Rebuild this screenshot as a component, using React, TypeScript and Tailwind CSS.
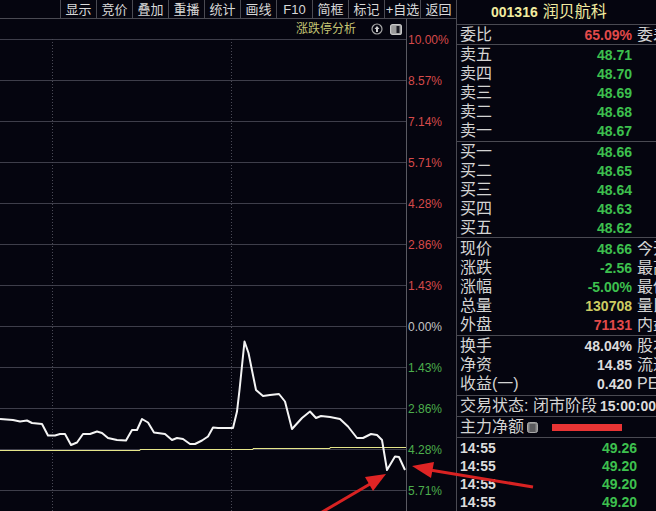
const tools = ["显示", "竞价", "叠加", "重播", "统计", "画线", "F10", "简框", "标记", "+自选", "返回"];

const axis = [
  ["10.00%", "text-[#d64a4a]"],
  ["8.57%", "text-[#d64a4a]"],
  ["7.14%", "text-[#d64a4a]"],
  ["5.71%", "text-[#d64a4a]"],
  ["4.28%", "text-[#d64a4a]"],
  ["2.86%", "text-[#d64a4a]"],
  ["1.43%", "text-[#d64a4a]"],
  ["0.00%", "text-[#c4c4c4]"],
  ["1.43%", "text-[#4cae4c]"],
  ["2.86%", "text-[#4cae4c]"],
  ["4.28%", "text-[#4cae4c]"],
  ["5.71%", "text-[#4cae4c]"],
];

const GREEN = "text-[#3dc04e]";
const RED = "text-[#e24a4a]";
const YELLOW = "text-[#cccc62]";
const WHITE = "text-[#dcdcdc]";

const sells = [
  ["卖五", "48.71"],
  ["卖四", "48.70"],
  ["卖三", "48.69"],
  ["卖二", "48.68"],
  ["卖一", "48.67"],
];
const buys = [
  ["买一", "48.66"],
  ["买二", "48.65"],
  ["买三", "48.64"],
  ["买四", "48.63"],
  ["买五", "48.62"],
];
const quotes = [
  { label: "现价", value: "48.66", color: GREEN, extra: "今开" },
  { label: "涨跌", value: "-2.56", color: GREEN, extra: "最高" },
  { label: "涨幅", value: "-5.00%", color: GREEN, extra: "最低" },
  { label: "总量", value: "130708", color: YELLOW, extra: "量比" },
  { label: "外盘", value: "71131", color: RED, extra: "内盘" },
];
const finance = [
  { label: "换手", value: "48.04%", color: WHITE, extra: "股本" },
  { label: "净资", value: "14.85", color: WHITE, extra: "流通" },
  { label: "收益(一)", value: "0.420", color: WHITE, extra: "PE" },
];
const ticks = ["49.26", "49.20", "49.20", "49.20"];

const price =
  "0,419 13,420 20,421.5 27,420.5 32,423 42,424 48,435.5 55,435.5 60,434 65,434 71,445 77,442.5 83,434 90,434 97,431.5 102,433 108,438 117,440 126,440.5 132,430 137,430 142,419 148,422.5 154,432.5 165,434 172,440 177,438 183,439 190,444 195,444 202,440.5 208,436.5 213,427.5 218,428 233,428 237,411.5 239.5,390 244.5,341.5 248.5,353 256,390 263,396 270,395 279,394 285,401.5 292,429 302,418 310,411.5 316,418 321,416 330,417 340,419 348,426.5 357,438 363,438 371,434 377,435 382,440 387,470 395,456.5 399,457 405,470";

function Row({ label, value, color, extra }: { label: string; value: string; color: string; extra?: string }) {
  return (
    <div className="flex h-[19px] items-center pl-[3px]">
      <span className="flex-1 whitespace-nowrap text-[16px] text-[#d4d4d4]">{label}</span>
      <span className={`text-[14px] font-bold ${color}`}>{value}</span>
      <span className="ml-[5px] w-[19px] overflow-hidden whitespace-nowrap text-[16px] text-[#d4d4d4]">{extra}</span>
    </div>
  );
}

function PriceChart() {
  const grid = [39, 80, 121, 162, 203, 244, 285, 326, 367, 408, 449, 490];
  return (
    <svg className="block" width="406" height="472" viewBox="0 39 406 472">
      {grid.map((y) => (
        <line key={y} x1="0" x2="406" y1={y + 0.5} y2={y + 0.5} stroke="#3e3e4a" strokeWidth="1" />
      ))}
      <line x1="52.5" x2="52.5" y1="39" y2="511" stroke="#4a4a56" strokeDasharray="1 2" />
      <line x1="231.5" x2="231.5" y1="39" y2="511" stroke="#4a4a56" strokeDasharray="1 2" />
      <polyline
        points="0,450.5 140,450.5 140,449.5 253,449.5 253,448.5 330,448.5 330,447.5 406,447.5"
        fill="none"
        stroke="#e6e68a"
        strokeWidth="1"
      />
      <polyline points={price} fill="none" stroke="#f4f4f4" strokeWidth="2" strokeLinejoin="round" />
    </svg>
  );
}

export default function App() {
  return (
    <div className="relative flex h-[511px] w-[656px] overflow-hidden bg-[#05050f] font-['Liberation_Sans','Noto_Sans_CJK_SC',sans-serif] leading-none">
      {/* left: toolbar + chart */}
      <div className="flex w-[456px] flex-col">
        <div className="flex h-[19px] border-b border-[#4a4a52] pl-[60px]">
          {tools.map((t) => (
            <div
              key={t}
              className="flex w-[36px] items-center justify-center border-l border-[#4a4a52] text-[13px] text-[#d8d8d8]"
            >
              {t}
            </div>
          ))}
        </div>
        <div className="flex flex-1">
          <div className="flex w-[406px] flex-col">
            <div className="flex h-[20px] items-center justify-end gap-[7px] pr-[4px]">
              <span className="mr-[8px] text-[12px] text-[#c4c474]">涨跌停分析</span>
              <svg width="12" height="12" viewBox="0 0 12 12">
                <circle cx="6" cy="6" r="5" fill="none" stroke="#a8a8a8" strokeWidth="1.2" />
                <path d="M6 3 L8.5 6 H7 V9 H5 V6 H3.5 Z" fill="#d0d0d0" />
              </svg>
              <svg width="12" height="11" viewBox="0 0 12 11">
                <rect x="0.6" y="0.6" width="10.8" height="9.8" rx="2" fill="#9a9a9a" stroke="#c8c8c8" strokeWidth="1.2" />
                <rect x="6.5" y="2" width="3" height="7" fill="#1a1a22" />
              </svg>
            </div>
            <PriceChart />
          </div>
          <div className="flex w-[50px] flex-col border-l border-[#5a5a62]">
            {axis.map(([t, c], i) => (
              <div key={i} className={`flex h-[41px] items-center pl-[1px] text-[12px] ${c}`}>
                {t}
              </div>
            ))}
          </div>
        </div>
      </div>

      {/* right: quote panel */}
      <div className="flex w-[200px] flex-col border-l border-[#4a4a52]">
        <div className="flex h-[25px] items-center border-b border-[#4a4a52] pl-[34px] text-[#f2eca0]">
          <span className="text-[14px] font-bold">001316</span>
          <span className="ml-[5px] text-[16px]">润贝航科</span>
        </div>
        <div className="border-b border-[#4a4a52]">
          <Row label="委比" value="65.09%" color={RED} extra="委差" />
        </div>
        <div className="border-b border-[#4a4a52] pb-[1px]">
          {sells.map(([l, v]) => (
            <Row key={l} label={l} value={v} color={GREEN} />
          ))}
        </div>
        <div className="border-b border-[#4a4a52]">
          {buys.map(([l, v]) => (
            <Row key={l} label={l} value={v} color={GREEN} />
          ))}
        </div>
        <div className="border-b border-[#4a4a52] pb-[1px] pt-[1px]">
          {quotes.map((q) => (
            <Row key={q.label} {...q} />
          ))}
        </div>
        <div className="border-b border-[#4a4a52] pb-[2px]">
          {finance.map((q) => (
            <Row key={q.label} {...q} />
          ))}
        </div>
        <div className="flex h-[21px] items-center border-b border-[#4a4a52] pl-[3px]">
          <span className="whitespace-nowrap text-[16px] text-[#d4d4d4]">交易状态: 闭市阶段</span>
          <span className="ml-[3px] text-[14px] font-bold text-[#dcdcdc]">15:00:00</span>
        </div>
        <div className="flex h-[21px] items-center border-b border-[#4a4a52] pl-[3px]">
          <span className="text-[16px] text-[#d4d4d4]">主力净额</span>
          <svg className="ml-[3px]" width="11" height="11" viewBox="0 0 11 11">
            <rect x="0.5" y="0.5" width="10" height="10" rx="2" fill="#8a8a8a" stroke="#a8a8a8" />
            <path d="M2.5 3h6M2.5 5h6M2.5 7h6M2.5 9h6" stroke="#2a2a30" strokeWidth="1" />
          </svg>
          <div className="ml-[14px] h-[7px] w-[70px] bg-[#e83434]" />
        </div>
        <div className="pt-[1px]">
          {ticks.map((v, i) => (
            <div key={i} className="flex h-[18px] items-center pl-[3px]">
              <span className="flex-1 text-[14px] font-bold text-[#dcdcdc]">14:55</span>
              <span className={`mr-[19px] text-[14px] font-bold ${GREEN}`}>{v}</span>
            </div>
          ))}
        </div>
      </div>

      {/* annotation arrows drawn over the screenshot */}
      <svg className="pointer-events-none absolute left-0 top-0" width="656" height="511">
        <line x1="533" y1="487" x2="430" y2="470" stroke="#d82222" strokeWidth="3" />
        <polygon points="412,466 434,462 431,478" fill="#e02424" />
        <line x1="312" y1="518" x2="370" y2="484" stroke="#d82222" strokeWidth="3" />
        <polygon points="386,474 373,491 365,477" fill="#e02424" />
      </svg>
    </div>
  );
}
